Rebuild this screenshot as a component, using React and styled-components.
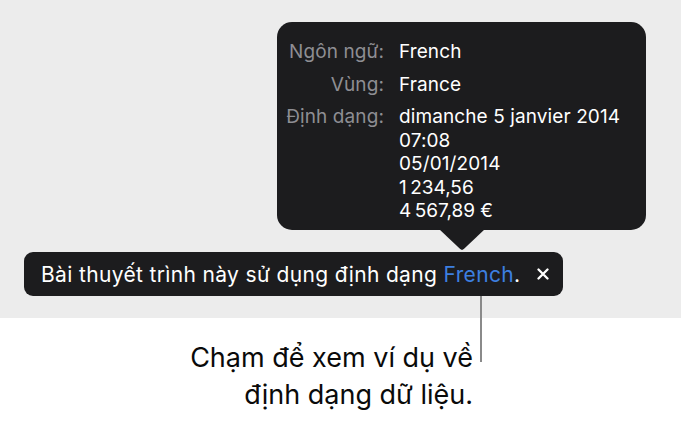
import React from "react";
import styled, { createGlobalStyle } from "styled-components";

const Global = createGlobalStyle`
  html, body { margin: 0; padding: 0; background: #ffffff; }
  body { font-family: Inter, "Noto Sans", "Liberation Sans", sans-serif; -webkit-font-smoothing: antialiased; }
`;

const Page = styled.div`
  width: 681px;
  height: 422px;
  position: relative;
  overflow: hidden;
  background: #ffffff;
`;

const Stage = styled.div`
  height: 318px;
  box-sizing: border-box;
  background: #ececec;
  padding-top: 22px;
  display: flex;
  flex-direction: column;
`;

const Popover = styled.div`
  position: relative;
  margin-left: 277px;
  width: 369px;
  height: 208px;
  box-sizing: border-box;
  background: #1c1c1e;
  border-radius: 15px;
  padding: 18px 0 8px 0;
  display: grid;
  grid-template-columns: 107px 1fr;
  column-gap: 15px;
  row-gap: 9px;
  align-content: start;
  font-size: 19px;
  line-height: 23.5px;
  letter-spacing: 0.1px;

  &::after {
    content: "";
    position: absolute;
    left: 162px;
    top: 207px;
    width: 46px;
    height: 21px;
    background: #1c1c1e;
    clip-path: polygon(0 0, 100% 0, 54% 95%, 50% 100%, 46% 95%);
  }
`;

const Label = styled.div`
  color: #8e8e93;
  text-align: right;
`;

const Value = styled.div`
  color: #ffffff;
  display: flex;
  flex-direction: column;
`;

const Banner = styled.div`
  margin-top: 22px;
  margin-left: 24px;
  width: 539px;
  height: 44px;
  box-sizing: border-box;
  background: #1c1c1e;
  border-radius: 9px;
  display: flex;
  align-items: center;
  justify-content: space-between;
  padding: 0 13px 0 17px;
  color: #ffffff;
  font-size: 21px;
  letter-spacing: 0.35px;
`;

const Link = styled.span`
  color: #3d7fe0;
`;

const Close = styled.span`
  display: flex;
  align-items: center;
  justify-content: center;
  width: 14px;
  height: 14px;
`;

const Caption = styled.div`
  padding-top: 21px;
  width: 473px;
  text-align: right;
  font-size: 27px;
  line-height: 37px;
  color: #0a0a0a;
`;

const Leader = styled.div`
  position: absolute;
  left: 480px;
  top: 296px;
  width: 2px;
  height: 66px;
  background: #8a8a8a;
`;

export default function App() {
  return (
    <Page>
      <Global />
      <Stage>
        <Popover>
          <Label>Ngôn ngữ:</Label>
          <Value>French</Value>
          <Label>Vùng:</Label>
          <Value>France</Value>
          <Label>Định dạng:</Label>
          <Value>
            <span>dimanche 5 janvier 2014</span>
            <span>07:08</span>
            <span>05/01/2014</span>
            <span>{"1\u202F234,56"}</span>
            <span>{"4\u202F567,89\u00A0€"}</span>
          </Value>
        </Popover>
        <Banner>
          <span>
            Bài thuyết trình này sử dụng định dạng <Link>French</Link>.
          </span>
          <Close>
            <svg width="12" height="12" viewBox="0 0 12 12">
              <path d="M1.5 1.5 L10.5 10.5 M10.5 1.5 L1.5 10.5" stroke="#ffffff" strokeWidth="2.3" strokeLinecap="round" />
            </svg>
          </Close>
        </Banner>
      </Stage>
      <Caption>
        Chạm để xem ví dụ về
        <br />
        định dạng dữ liệu.
      </Caption>
      <Leader />
    </Page>
  );
}
